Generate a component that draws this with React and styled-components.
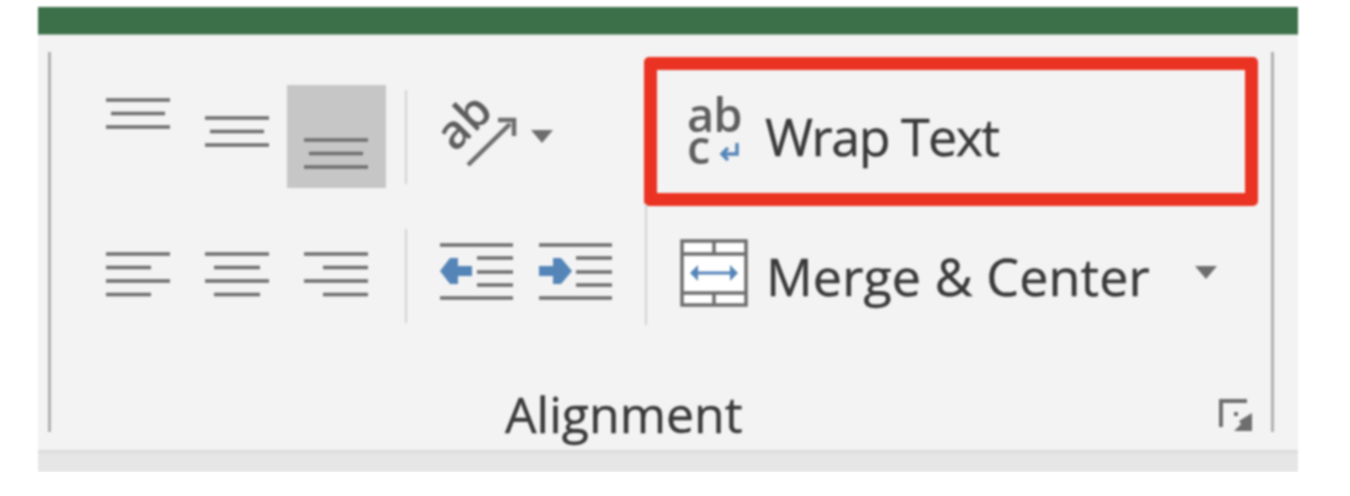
import React from 'react';
import styled, { createGlobalStyle } from 'styled-components';

const GlobalStyle = createGlobalStyle`
  html, body {
    margin: 0;
    padding: 0;
    background: #ffffff;
  }
`;

const Ribbon = styled.div`
  width: 1260px;
  margin: 7px 0 0 38px;
  font-family: "Open Sans", "Noto Sans", sans-serif;
  color: #3a3a3a;
  filter: blur(0.9px);
`;

const TitleBar = styled.div`
  height: 27px;
  background: #3c7049;
  border-bottom: 1px solid #8fb09a;
`;

const Body = styled.div`
  height: 398px;
  padding: 17px 0 0 10px;
  background: #f3f3f3;
  border-bottom: 3px solid #dcdcdc;
`;

const Footer = styled.div`
  height: 19px;
  background: #e6e6e6;
`;

const Group = styled.div`
  display: flex;
  flex-direction: column;
  box-sizing: border-box;
  width: 1226px;
  height: 380px;
  border-left: 3px solid #b0b0b0;
  border-right: 3px solid #b0b0b0;
`;

const Controls = styled.div`
  display: grid;
  grid-template-columns: 298px 40px 218px 614px;
  grid-template-rows: 103px 103px;
  row-gap: 34px;
  padding: 33px 0 0 37px;
`;

const AlignRow = styled.div`
  display: grid;
  grid-template-columns: repeat(3, 1fr);
`;

const AlignButton = styled.div`
  display: flex;
  justify-content: center;
  align-items: flex-start;
  box-sizing: border-box;
  padding-top: ${(p) => p.$top}px;
  background: ${(p) => (p.$active ? '#c6c6c6' : 'transparent')};
`;

const Separator = styled.div`
  justify-self: center;
  align-self: center;
  width: 2px;
  height: 94px;
  margin-top: ${(p) => p.$shift || 0}px;
  background: #d2d2d2;
`;

const ToolRow = styled.div`
  display: flex;
  align-items: flex-start;
  gap: 26px;
  padding: ${(p) => p.$pad};
`;

const Caret = styled.span`
  width: 0;
  height: 0;
  margin: ${(p) => p.$margin || '0'};
  border-left: 11px solid transparent;
  border-right: 11px solid transparent;
  border-top: 13px solid #6e6e6e;
`;

const WrapButton = styled.div`
  display: flex;
  align-items: center;
  box-sizing: border-box;
  height: 149px;
  margin-top: -28px;
  padding-left: 30px;
  border: 13px solid #ea3323;
  border-radius: 5px;
`;

const MergeButton = styled.div`
  display: flex;
  align-items: center;
  height: 121px;
  margin: -18px 0 0 1px;
  padding: 16px 0 0 33px;
  box-sizing: border-box;
  border-left: 2px solid #d2d2d2;
`;

const Label = styled.span`
  position: relative;
  top: ${(p) => p.$drop}px;
  font-size: 52px;
  line-height: 60px;
  letter-spacing: ${(p) => p.$spacing}px;
  white-space: nowrap;
  margin-left: ${(p) => p.$left}px;
  -webkit-text-stroke: 0.4px #3a3a3a;
`;

const GroupFooter = styled.div`
  display: flex;
  align-items: flex-end;
  margin-top: auto;
`;

const GroupLabel = styled.span`
  margin-left: 454px;
  margin-bottom: -12px;
  font-size: 50px;
  line-height: 60px;
  white-space: nowrap;
  -webkit-text-stroke: 0.4px #3a3a3a;
`;

const Launcher = styled.svg`
  display: block;
  margin-left: auto;
  margin-right: 18px;
`;

const Icon = styled.svg`
  display: block;
  flex: none;
  overflow: visible;
`;

const LINE = '#6e6e6e';
const BLUE = '#5585b8';

// each row is [from, to] across a 64 wide icon
const Lines = ({ rows, gap }) => (
  <Icon width="64" height={gap * (rows.length - 1) + 6} stroke={LINE} strokeWidth="3.4">
    {rows.map(([a, b], i) => (
      <line key={i} x1={a} x2={b} y1={3 + i * gap} y2={3 + i * gap} />
    ))}
  </Icon>
);

const VERT = [[0, 64], [5, 59], [0, 64]];

const OrientIcon = () => (
  <Icon width="76" height="70" viewBox="0 0 76 70">
    <text
      x="0"
      y="0"
      transform="translate(15 54) rotate(-45)"
      fontFamily="'Open Sans', sans-serif"
      fontSize="47"
      fontWeight="600"
      fill="#5e5e5e"
    >
      ab
    </text>
    <path d="M28 66 L70 25" fill="none" stroke={LINE} strokeWidth="4.5" />
    <path d="M58 21 H74 V37" fill="none" stroke={LINE} strokeWidth="4.5" />
  </Icon>
);

const IndentIcon = ({ right }) => (
  <Icon width="73" height="57" viewBox="0 0 73 57">
    <g stroke={LINE} strokeWidth="3.6">
      <line x1="0" x2="73" y1="2" y2="2" />
      <line x1="37" x2="73" y1="15" y2="15" />
      <line x1="37" x2="73" y1="29" y2="29" />
      <line x1="37" x2="73" y1="42" y2="42" />
      <line x1="0" x2="73" y1="55" y2="55" />
    </g>
    <path
      d={
        right
          ? 'M0 23 H14 V15 L22 15 L33 28 L22 41 L14 41 V33 H0 Z'
          : 'M32 23 H18 V15 L10 15 L0 28 L10 41 L18 41 V33 H32 Z'
      }
      fill={BLUE}
    />
  </Icon>
);

const WrapIcon = () => (
  <Icon width="56" height="72" viewBox="0 0 56 72">
    <g fontFamily="'Open Sans', sans-serif" fontSize="47" fontWeight="600" fill="#5e5e5e">
      <text x="0" y="36" letterSpacing="-1">ab</text>
      <text x="0" y="68">c</text>
    </g>
    <path d="M50 47 V58 H36 M41 52 L35 58 L41 64" fill="none" stroke={BLUE} strokeWidth="3.5" />
  </Icon>
);

const MergeIcon = () => (
  <Icon width="68" height="68" viewBox="0 0 68 68">
    <rect x="2" y="2" width="64" height="64" fill="#ffffff" stroke={LINE} strokeWidth="3.5" />
    <path d="M2 15 H66 M2 54 H66 M34 2 V15 M34 54 V66" stroke={LINE} strokeWidth="3.5" />
    <path d="M14 34 H54" stroke={BLUE} strokeWidth="3" />
    <path d="M10 34 L18 26 V42 Z M58 34 L50 26 V42 Z" fill={BLUE} />
  </Icon>
);

const LauncherIcon = () => (
  <Launcher width="34" height="33" viewBox="0 0 34 33">
    <path d="M2 28 V2 H28" fill="none" stroke={LINE} strokeWidth="4" />
    <rect x="15" y="13" width="4" height="4" fill={LINE} />
    <path d="M33 14 V32 H15 L22 25 L20 22 Z" fill={LINE} />
  </Launcher>
);

const App = () => {
  return (
    <>
      <GlobalStyle />
      <Ribbon>
        <TitleBar />
        <Body>
          <Group>
            <Controls>
              <AlignRow>
                <AlignButton $top={12}><Lines rows={VERT} gap={13.5} /></AlignButton>
                <AlignButton $top={30}><Lines rows={VERT} gap={13.5} /></AlignButton>
                <AlignButton $top={52} $active><Lines rows={VERT} gap={13.5} /></AlignButton>
              </AlignRow>
              <Separator />
              <ToolRow $pad="14px 0 0 14px">
                <OrientIcon />
                <Caret $margin="31px 0 0 -11px" />
              </ToolRow>
              <WrapButton>
                <WrapIcon />
                <Label $left={22} $spacing={-1.5} $drop={4}>Wrap Text</Label>
              </WrapButton>

              <AlignRow>
                <AlignButton $top={29}>
                  <Lines rows={[[0, 64], [0, 45], [0, 64], [0, 45]]} gap={13.5} />
                </AlignButton>
                <AlignButton $top={29}>
                  <Lines rows={[[0, 64], [9, 55], [0, 64], [9, 55]]} gap={13.5} />
                </AlignButton>
                <AlignButton $top={29}>
                  <Lines rows={[[0, 64], [19, 64], [0, 64], [19, 64]]} gap={13.5} />
                </AlignButton>
              </AlignRow>
              <Separator $shift={5} />
              <ToolRow $pad="21px 0 0 14px">
                <IndentIcon />
                <IndentIcon right />
              </ToolRow>
              <MergeButton>
                <MergeIcon />
                <Label $left={18} $spacing={0.1} $drop={3}>Merge &amp; Center</Label>
                <Caret $margin="0 0 0 45px" />
              </MergeButton>
            </Controls>
            <GroupFooter>
              <GroupLabel>Alignment</GroupLabel>
              <LauncherIcon />
            </GroupFooter>
          </Group>
        </Body>
        <Footer />
      </Ribbon>
    </>
  );
};

export default App;
